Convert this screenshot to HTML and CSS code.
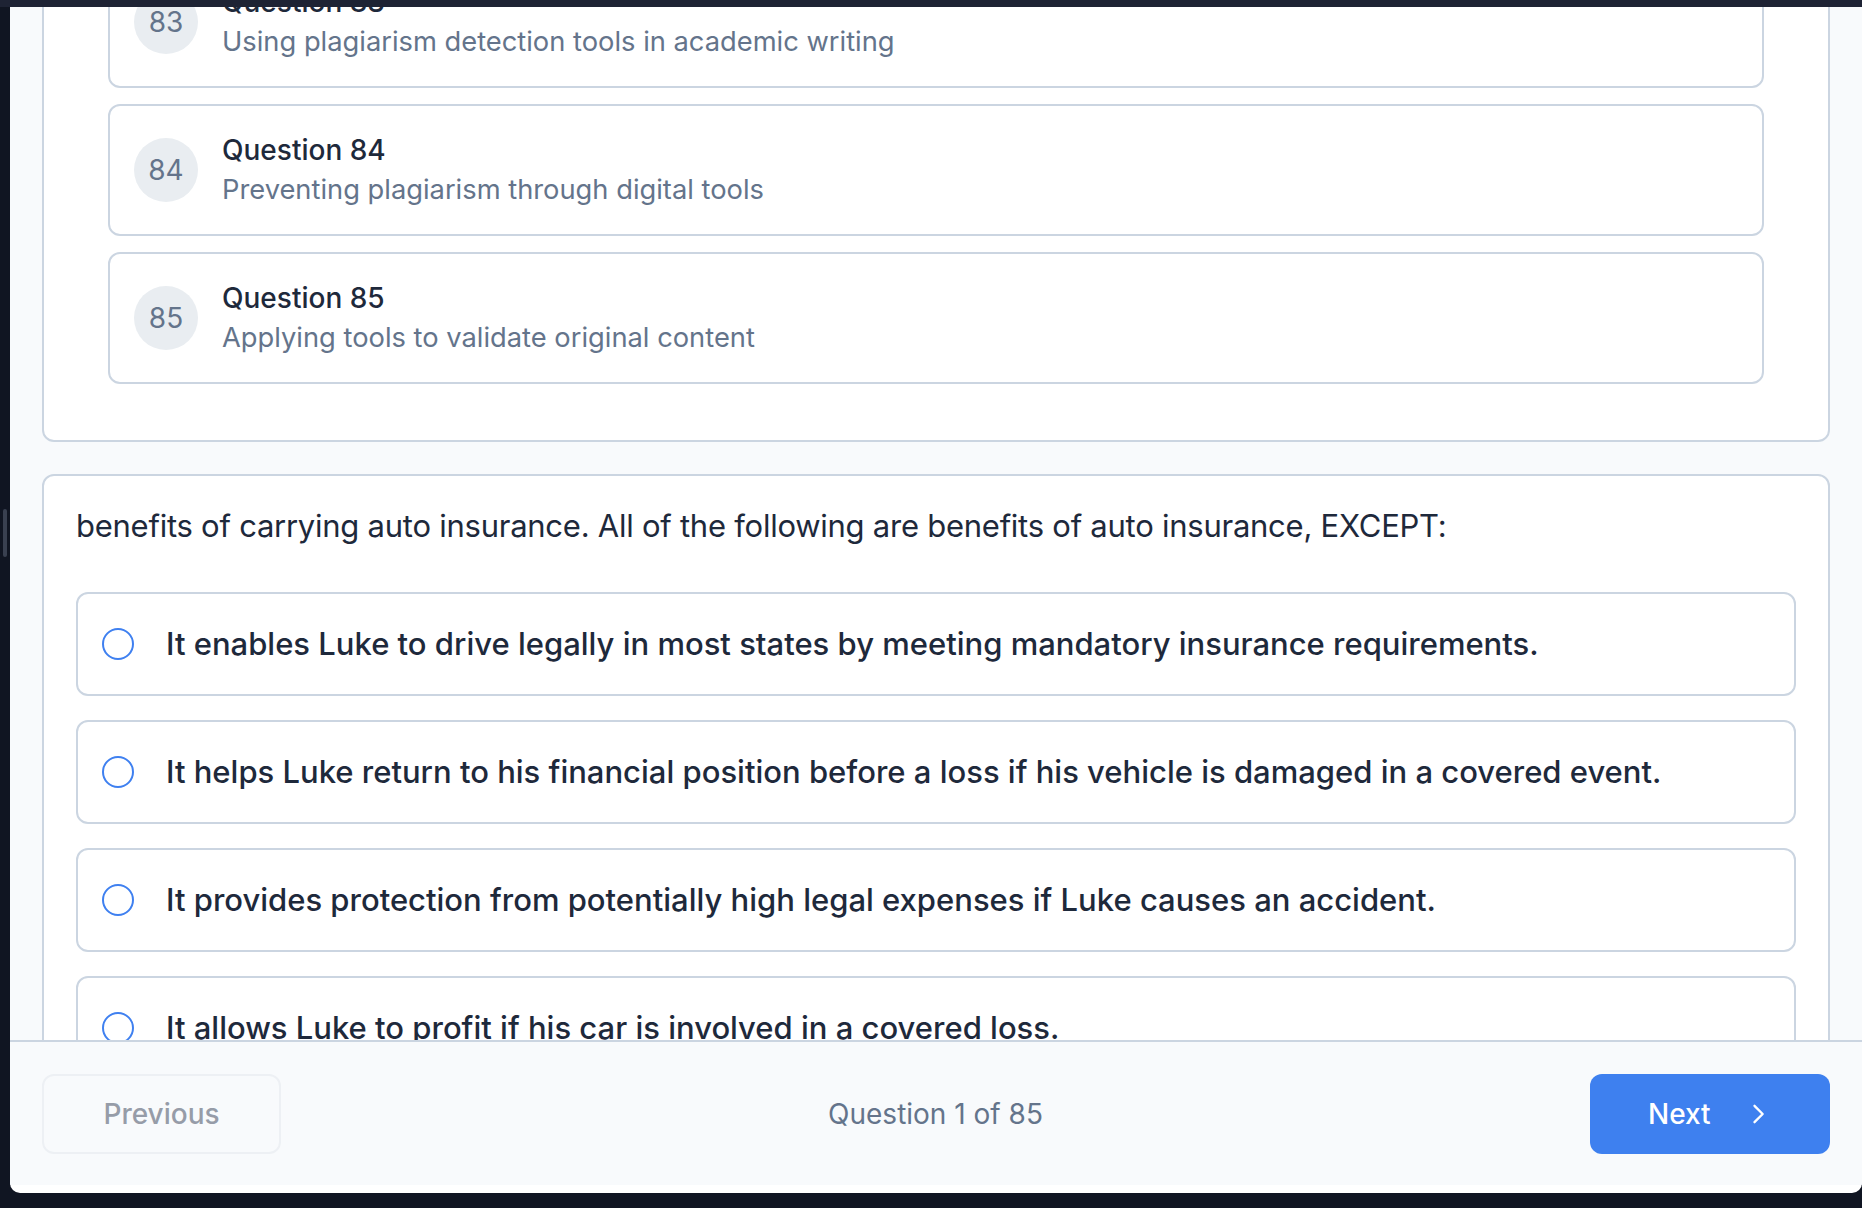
FILE: index.html
```html
<!DOCTYPE html>
<html lang="en">
<head>
<meta charset="utf-8">
<title>Quiz</title>
<link rel="stylesheet" href="styles.css">
</head>
<body>
<div class="topbar"></div>
<div class="backdrop-thumb"></div>
<div class="modal">
  <div class="scroll">
    <div class="content">
      <section class="card list-card">
        <ul class="qlist">
          <li class="qitem">
            <span class="qnum">83</span>
            <div class="qtext">
              <div class="qtitle">Question 83</div>
              <div class="qdesc">Using plagiarism detection tools in academic writing</div>
            </div>
          </li>
          <li class="qitem">
            <span class="qnum">84</span>
            <div class="qtext">
              <div class="qtitle">Question 84</div>
              <div class="qdesc">Preventing plagiarism through digital tools</div>
            </div>
          </li>
          <li class="qitem">
            <span class="qnum">85</span>
            <div class="qtext">
              <div class="qtitle">Question 85</div>
              <div class="qdesc">Applying tools to validate original content</div>
            </div>
          </li>
        </ul>
      </section>
      <section class="card question-card">
        <p class="question">benefits of carrying auto insurance. All of the following are benefits of auto insurance, EXCEPT:</p>
        <div class="options">
          <label class="option"><span class="radio"></span><span class="option-text">It enables Luke to drive legally in most states by meeting mandatory insurance requirements.</span></label>
          <label class="option"><span class="radio"></span><span class="option-text">It helps Luke return to his financial position before a loss if his vehicle is damaged in a covered event.</span></label>
          <label class="option"><span class="radio"></span><span class="option-text">It provides protection from potentially high legal expenses if Luke causes an accident.</span></label>
          <label class="option"><span class="radio"></span><span class="option-text">It allows Luke to profit if his car is involved in a covered loss.</span></label>
        </div>
      </section>
    </div>
  </div>
  <footer class="footer">
    <button class="btn btn-prev" type="button">Previous</button>
    <span class="progress">Question 1 of 85</span>
    <button class="btn btn-next" type="button">
      <span>Next</span>
      <svg viewBox="0 0 24 24" fill="none" stroke="currentColor" stroke-width="2" stroke-linecap="round" stroke-linejoin="round" aria-hidden="true"><path d="M9 5l7 7-7 7"/></svg>
    </button>
  </footer>
</div>
</body>
</html>
```

FILE: styles.css
```css
* {
  box-sizing: border-box;
}

html,
body {
  margin: 0;
  height: 100%;
}

body {
  position: relative;
  overflow: hidden;
  background: #101522;
  font-family: Inter, "Noto Sans", sans-serif;
  color: #1e293b;
}

.topbar {
  height: 7px;
  background: #1e2334;
}

.backdrop-thumb {
  position: absolute;
  left: 3px;
  top: 509px;
  width: 4px;
  height: 48px;
  border-radius: 2px;
  background: #394050;
}

.modal {
  margin-left: 10px;
  width: 1852px;
  height: 1186px;
  display: flex;
  flex-direction: column;
  padding-bottom: 8px;
  background: #ffffff;
  border-radius: 0 0 10px 10px;
  overflow: hidden;
}

.scroll {
  flex: 1;
  min-height: 0;
  overflow: hidden;
  background: #f8fafc;
  padding: 0 32px;
}

.content {
  margin-top: -117px;
  display: flex;
  flex-direction: column;
  gap: 32px;
}

.card {
  background: #ffffff;
  border: 2px solid #cbd5e1;
  border-radius: 12px;
}

.list-card {
  padding: 64px 64px 56px;
}

.qlist {
  list-style: none;
  margin: 0;
  padding: 0;
  display: flex;
  flex-direction: column;
  gap: 16px;
}

.qitem {
  display: flex;
  align-items: center;
  gap: 24px;
  padding: 24px;
  background: #ffffff;
  border: 2px solid #cbd5e1;
  border-radius: 12px;
}

.qnum {
  flex-shrink: 0;
  width: 64px;
  height: 64px;
  border-radius: 50%;
  background: #e9edf1;
  color: #64748b;
  font-size: 28px;
  display: flex;
  align-items: center;
  justify-content: center;
}

.qtitle {
  font-size: 28px;
  line-height: 40px;
  font-weight: 500;
  color: #1e293b;
}

.qdesc {
  font-size: 27.3px;
  line-height: 40px;
  color: #64748b;
}

.question-card {
  padding: 26px 32px 32px;
}

.question {
  margin: 0 0 42px;
  font-size: 31px;
  letter-spacing: -0.25px;
  line-height: 48px;
  color: #1e293b;
}

.options {
  display: flex;
  flex-direction: column;
  gap: 24px;
}

.option {
  display: flex;
  align-items: center;
  gap: 32px;
  padding: 24px;
  background: #ffffff;
  border: 2px solid #cbd5e1;
  border-radius: 12px;
}

.radio {
  flex-shrink: 0;
  width: 32px;
  height: 32px;
  border: 2px solid #3f80f0;
  border-radius: 50%;
}

.option-text {
  font-size: 31px;
  line-height: 52px;
  font-weight: 500;
  color: #1e293b;
}

.footer {
  flex-shrink: 0;
  display: flex;
  align-items: center;
  justify-content: space-between;
  padding: 32px 32px 31px;
  background: #f8fafc;
  border-top: 2px solid #cbd5e1;
}

.btn {
  height: 80px;
  border-radius: 12px;
  font-family: inherit;
  font-size: 28px;
  font-weight: 500;
  display: inline-flex;
  align-items: center;
}

.btn-prev {
  width: 239px;
  justify-content: center;
  border: 2px solid #edf0f4;
  background: #f8fafc;
  color: #969ca8;
}

.btn-next {
  width: 240px;
  justify-content: space-between;
  padding: 0 58px;
  border: none;
  background: #3e80ef;
  color: #ffffff;
}

.btn-next svg {
  width: 28px;
  height: 28px;
}

.progress {
  font-size: 28px;
  color: #64748b;
}
```
